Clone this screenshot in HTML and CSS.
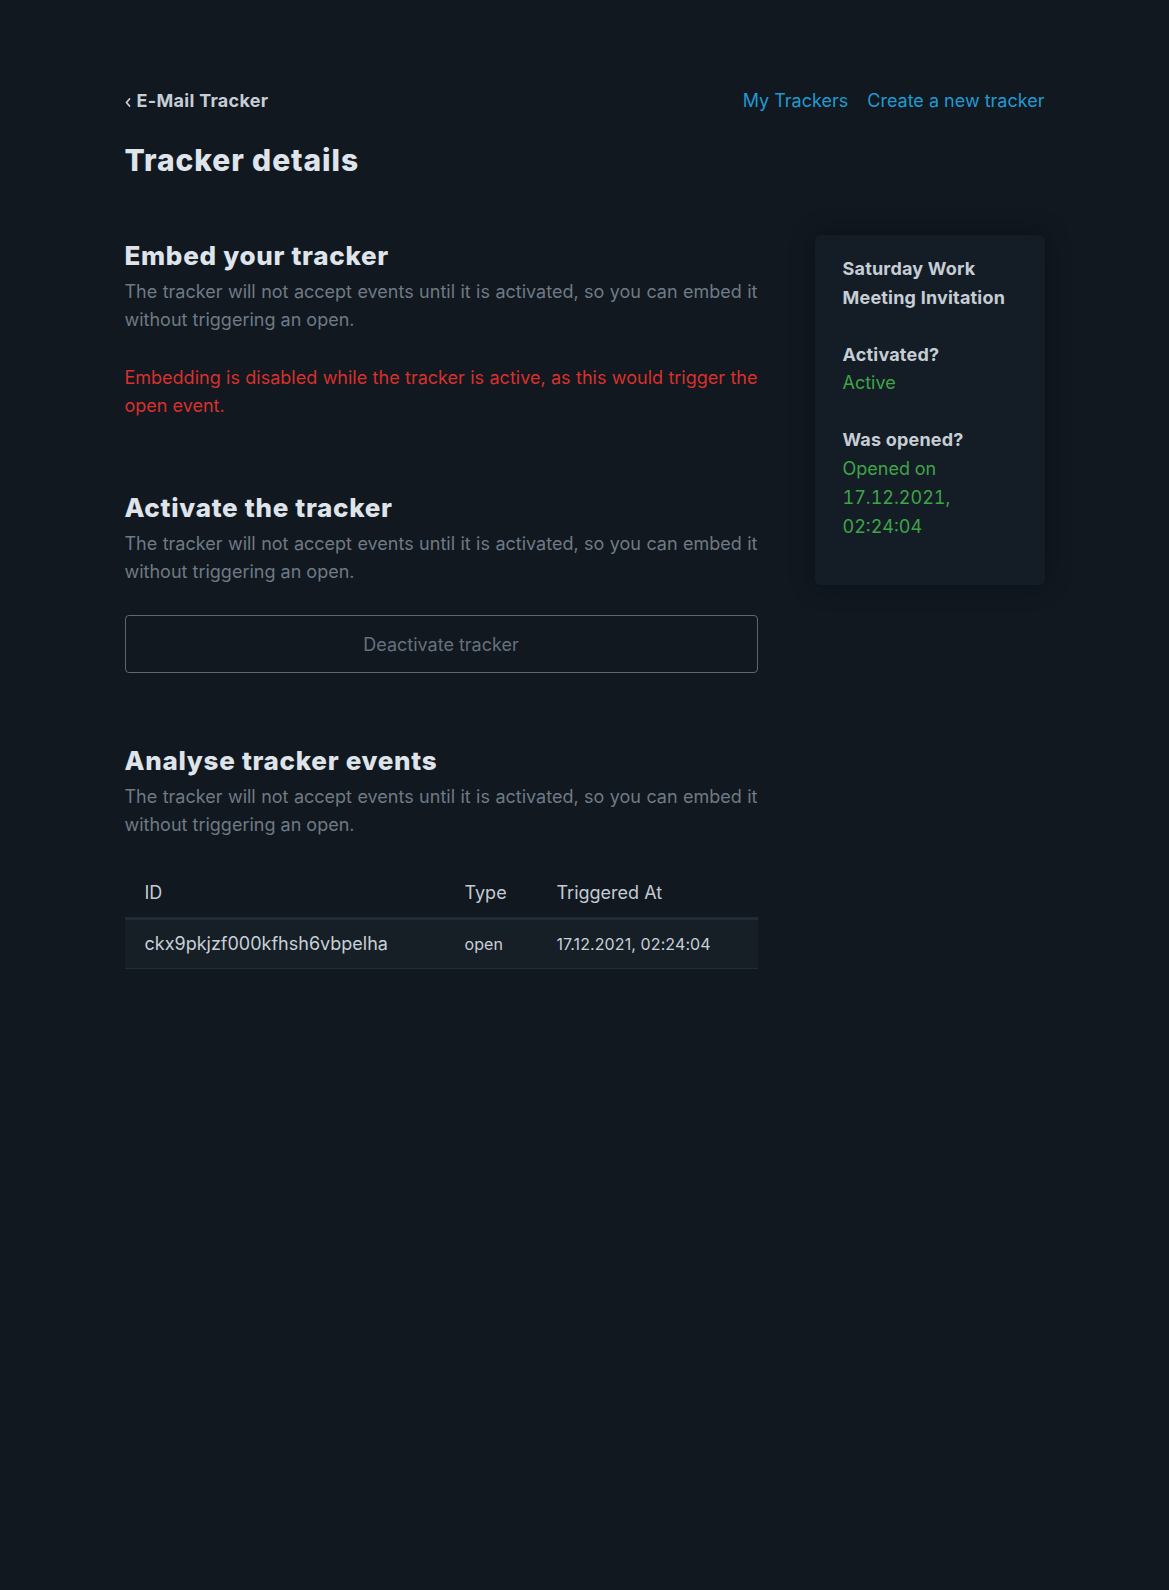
FILE: index.html
```html
<!DOCTYPE html>
<html lang="en">
<head>
    <meta charset="UTF-8">
    <meta name="viewport" content="width=device-width, initial-scale=1.0">
    <title>Tracker details</title>
    <link rel="stylesheet" href="styles.css">
</head>
<body>
    <div class="page">
        <header class="topbar">
            <a class="brand" href="#">
                <svg class="chevron" width="6" height="9" viewBox="0 0 6 9"><path d="M4.5 1 L1.5 4.5 L4.5 8" fill="none" stroke="currentColor" stroke-width="1.8" stroke-linecap="round" stroke-linejoin="round"/></svg>
                E-Mail Tracker
            </a>
            <nav class="nav">
                <a href="#">My Trackers</a>
                <a href="#">Create a new tracker</a>
            </nav>
        </header>

        <h1 class="page-title">Tracker details</h1>

        <div class="layout">
            <main class="main">
                <section class="section">
                    <h2>Embed your tracker</h2>
                    <p class="muted">The tracker will not accept events until it is activated, so you can embed it without triggering an open.</p>
                    <p class="warning">Embedding is disabled while the tracker is active, as this would trigger the open event.</p>
                </section>

                <section class="section">
                    <h2>Activate the tracker</h2>
                    <p class="muted">The tracker will not accept events until it is activated, so you can embed it without triggering an open.</p>
                    <button class="outline-button">Deactivate tracker</button>
                </section>

                <section class="section">
                    <h2>Analyse tracker events</h2>
                    <p class="muted">The tracker will not accept events until it is activated, so you can embed it without triggering an open.</p>

                    <table class="events">
                        <colgroup>
                            <col class="col-id">
                            <col class="col-type">
                            <col>
                        </colgroup>
                        <thead>
                            <tr>
                                <th>ID</th>
                                <th>Type</th>
                                <th>Triggered At</th>
                            </tr>
                        </thead>
                        <tbody>
                            <tr>
                                <td class="event-id">ckx9pkjzf000kfhsh6vbpelha</td>
                                <td class="small">open</td>
                                <td class="small">17.12.2021, 02:24:04</td>
                            </tr>
                        </tbody>
                    </table>
                </section>
            </main>

            <aside class="card">
                <div class="card-block">
                    <div class="card-label">Saturday Work Meeting Invitation</div>
                </div>
                <div class="card-block">
                    <div class="card-label">Activated?</div>
                    <div class="card-value">Active</div>
                </div>
                <div class="card-block">
                    <div class="card-label">Was opened?</div>
                    <div class="card-value">Opened on 17.12.2021, 02:24:04</div>
                </div>
            </aside>
        </div>
    </div>
</body>
</html>
```

FILE: styles.css
```css
body {
    margin: 0;
    background-color: #111820;
    font-family: Inter, "Noto Sans", sans-serif;
    color: #dfe4ea;
    font-size: 18px;
    line-height: 28px;
}

.page {
    width: 920px;
    margin: 0 auto;
    padding-top: 87px;
}

.topbar {
    display: flex;
    justify-content: space-between;
    align-items: center;
}

.brand {
    display: flex;
    align-items: center;
    gap: 6px;
    color: #c6cdd5;
    font-weight: 700;
    letter-spacing: 0.3px;
    text-decoration: none;
}

.chevron {
    margin-top: 2px;
}

.nav {
    display: flex;
    gap: 19px;
}

.nav a {
    color: #1f9bd0;
    text-decoration: none;
}

.page-title {
    margin: 27px 0 0;
    font-size: 30px;
    line-height: 36px;
    font-weight: 800;
    letter-spacing: 0.9px;
}

.layout {
    display: grid;
    grid-template-columns: 1fr 230px;
    gap: 57px;
    align-items: start;
    margin-top: 57px;
}

.main {
    padding-top: 5px;
}

.section {
    margin-bottom: 72px;
}

.section h2 {
    margin: 0 0 6px;
    font-size: 26px;
    line-height: 32px;
    font-weight: 800;
    letter-spacing: 0.7px;
}

.muted {
    margin: 0;
    color: #6f7a84;
    text-align: justify;
}

.warning {
    margin: 30px 0 0;
    color: #d9302c;
    text-align: justify;
}

.outline-button {
    display: block;
    width: 100%;
    height: 58px;
    margin-top: 29px;
    background: transparent;
    border: 1px solid #5b6773;
    border-radius: 4px;
    color: #66717c;
    font-family: inherit;
    font-size: 18px;
}

.events {
    width: 100%;
    margin-top: 30px;
    border-collapse: collapse;
    table-layout: fixed;
}

.col-id {
    width: 320px;
}

.col-type {
    width: 92px;
}

.events th {
    padding: 10px 20px;
    text-align: left;
    font-weight: 400;
    color: #c3cbd3;
}

.events tbody tr {
    background-color: #161e26;
    border-top: 3px solid #1f2c38;
    border-bottom: 1px solid #232d36;
}

.events td {
    padding: 10px 20px;
    color: #c8d0d8;
}

.events td.small {
    font-size: 16px;
    letter-spacing: 0.1px;
}

.card {
    background-color: #141d26;
    border-radius: 6px;
    padding: 20px 34px 16px 28px;
    line-height: 28.8px;
    box-shadow: 0 0 24px rgba(0, 0, 0, 0.35);
}

.card-block {
    margin-bottom: 28px;
}

.card-label {
    font-weight: 700;
    letter-spacing: 0.2px;
    color: #c6cdd5;
}

.card-value {
    color: #3fa447;
    font-variant-numeric: tabular-nums;
}
```
